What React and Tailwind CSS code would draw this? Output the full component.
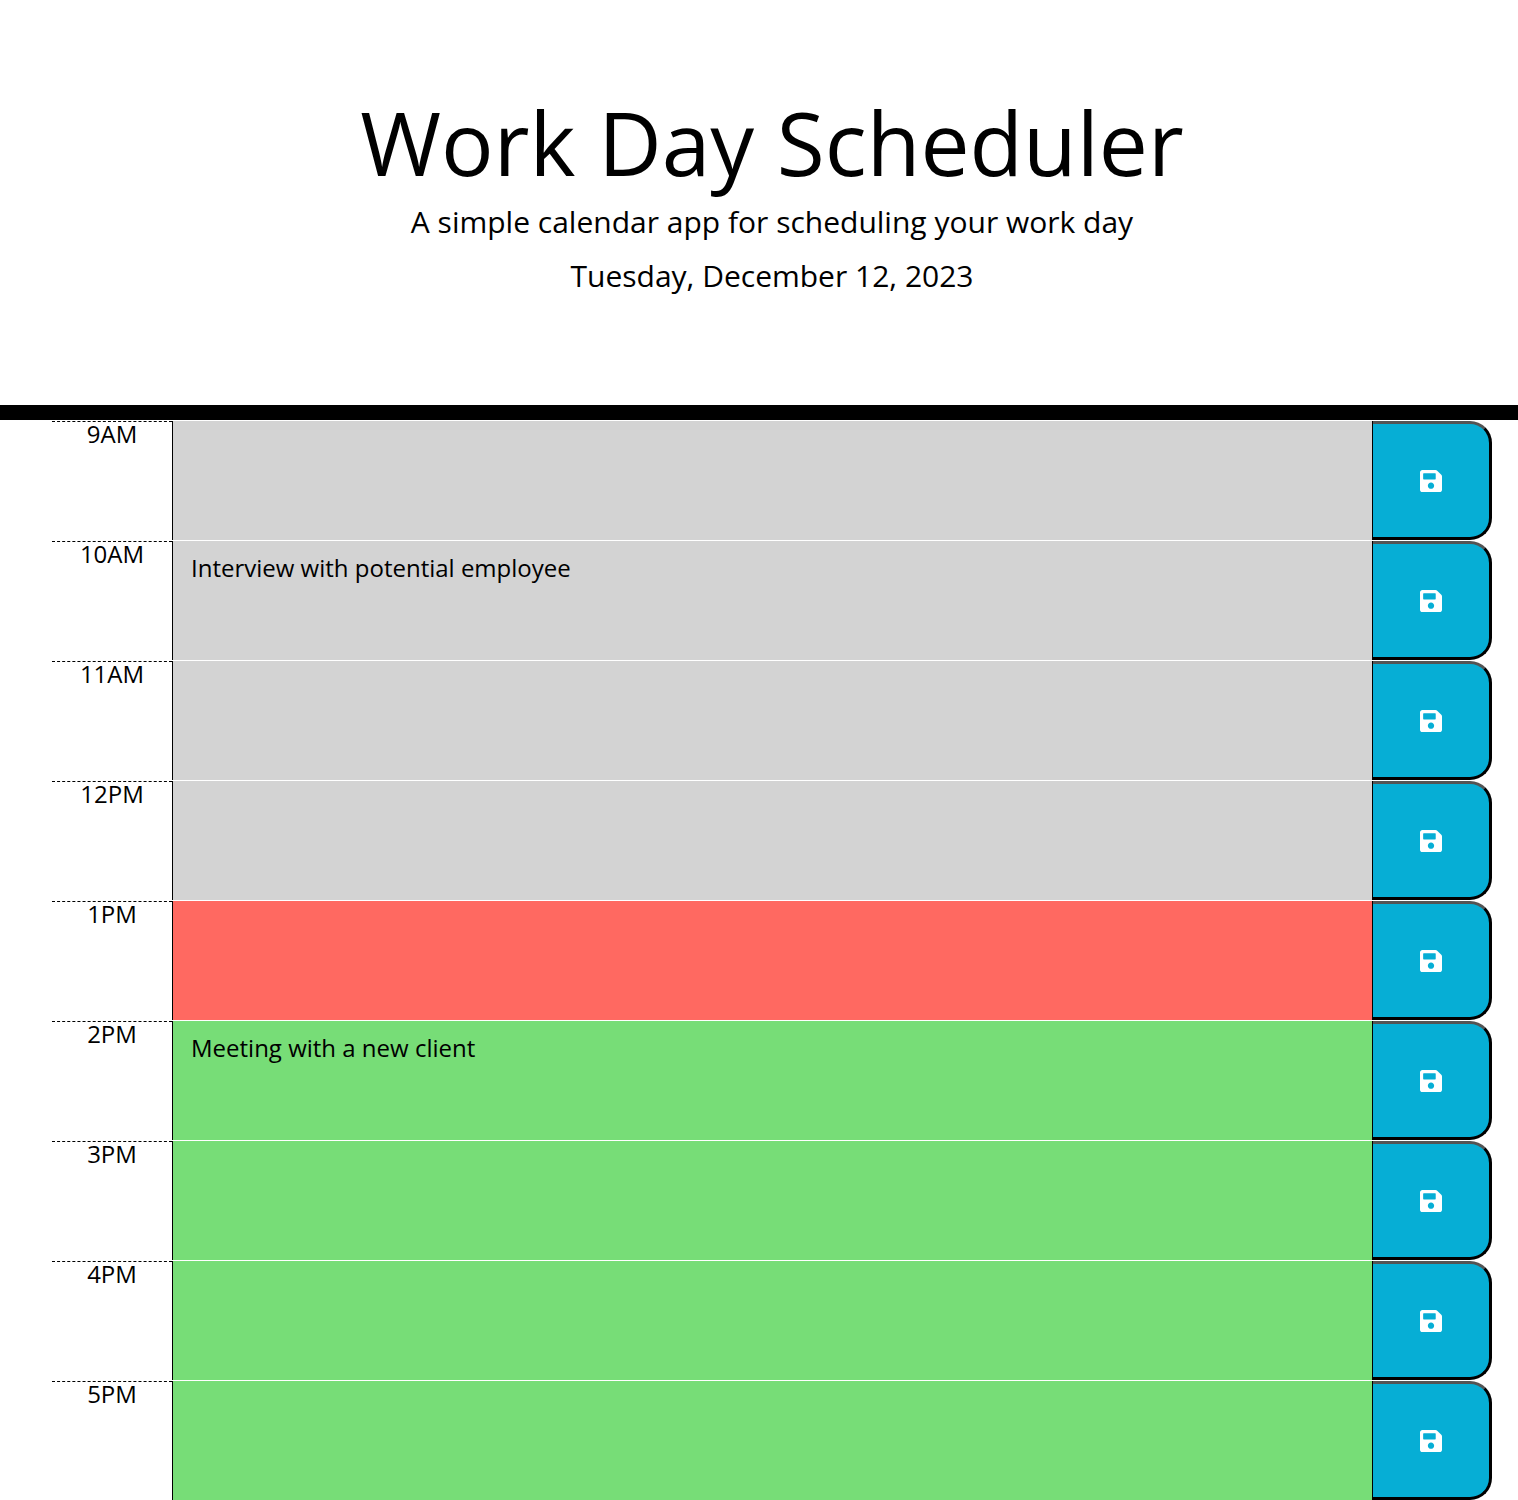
import React from "react";

const rows = [
  { hour: "9AM", state: "past", text: "" },
  { hour: "10AM", state: "past", text: "Interview with potential employee" },
  { hour: "11AM", state: "past", text: "" },
  { hour: "12PM", state: "past", text: "" },
  { hour: "1PM", state: "present", text: "" },
  { hour: "2PM", state: "future", text: "Meeting with a new client" },
  { hour: "3PM", state: "future", text: "" },
  { hour: "4PM", state: "future", text: "" },
  { hour: "5PM", state: "future", text: "" },
];

const fills = {
  past: "bg-[#d3d3d3]",
  present: "bg-[#ff6961]",
  future: "bg-[#77dd77]",
};

function SaveIcon() {
  return (
    <svg viewBox="0 32 448 448" className="size-[22px] fill-white" aria-hidden="true">
      <path d="M433.941 129.941l-83.882-83.882A48 48 0 0 0 316.118 32H48C21.49 32 0 53.49 0 80v352c0 26.51 21.49 48 48 48h352c26.51 0 48-21.49 48-48V163.882a48 48 0 0 0-14.059-33.941zM224 416c-35.346 0-64-28.654-64-64 0-35.346 28.654-64 64-64s64 28.654 64 64c0 35.346-28.654 64-64 64zm96-304.52V212c0 6.627-5.373 12-12 12H76c-6.627 0-12-5.373-12-12V108c0-6.627 5.373-12 12-12h228.52c3.183 0 6.235 1.264 8.485 3.515l3.48 3.48A11.996 11.996 0 0 1 320 111.48z" />
    </svg>
  );
}

function TimeBlock({ hour, state, text }) {
  return (
    <div className="flex h-[120px] border-t border-white">
      <div className="w-[120px] border-t border-dashed border-black text-center leading-6">{hour}</div>
      <div className={`flex-1 border-x border-black px-[18px] pt-[9px] leading-9 ${fills[state]}`}>
        {text}
      </div>
      <button className="flex w-[119px] items-center justify-center rounded-r-[22px] border-[3px] border-l-0 border-black border-t-[#545454] bg-[#06aed5] pt-px">
        <SaveIcon />
      </button>
    </div>
  );
}

export default function App() {
  return (
    <div className="h-[1500px] w-[1518px] overflow-hidden bg-white font-['Open_Sans',sans-serif] text-2xl text-black">
      <header className="h-[420px] border-b-[15px] border-black pt-[89px] pl-[26px] text-center">
        <h1 className="text-[87.5px] leading-[106px]">Work Day Scheduler</h1>
        <p className="mt-1 text-[30px] leading-[45px]">A simple calendar app for scheduling your work day</p>
        <p className="mt-[9px] text-[30px] leading-[45px]">Tuesday, December 12, 2023</p>
      </header>
      <main className="mr-[26px] ml-[52px]">
        {rows.map((row) => (
          <TimeBlock key={row.hour} {...row} />
        ))}
      </main>
    </div>
  );
}
